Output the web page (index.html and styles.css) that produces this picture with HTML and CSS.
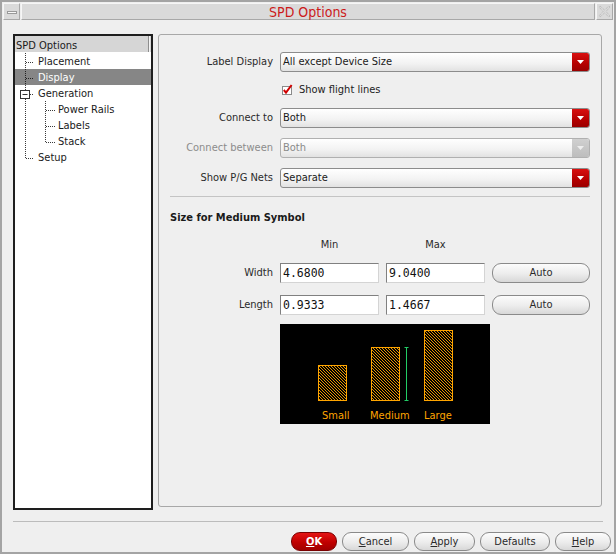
FILE: index.html
```html
<!DOCTYPE html>
<html>
<head>
<meta charset="utf-8">
<link rel="stylesheet" href="styles.css">
</head>
<body>
<div class="window">
  <div class="titlebar">
    <div class="tb-btn"><span class="minbar"></span></div>
    <div class="title">SPD Options</div>
    <div class="tb-btn">
      <svg width="15" height="15" viewBox="0 0 15 15"><path d="M3 2 L7.5 6 L12 2 L13 3 L9 7.5 L13 12 L12 13 L7.5 9 L3 13 L2 12 L6 7.5 L2 3 Z" fill="none" stroke="#b4b4b4" stroke-width="1" stroke-dasharray="1 1"/></svg>
    </div>
  </div>

  <div class="main">
    <div class="tree">
      <div class="tree-head"><span class="tree-head-cell">SPD Options</span><span class="tree-head-rest"></span></div>
      <div class="tree-row">
        <svg class="guide" width="23" height="16"><path d="M10.5 0 V16 M11 9.5 H19" class="dot"/></svg><span>Placement</span>
      </div>
      <div class="tree-row selected">
        <svg class="guide" width="23" height="16"><path d="M10.5 0 V16 M11 9.5 H19" class="dot"/></svg><span>Display</span>
      </div>
      <div class="tree-row">
        <svg class="guide" width="23" height="16"><path d="M10.5 0 V5 M10.5 14 V16 M15 9.5 H19" class="dot"/><rect x="5.5" y="5.5" width="9" height="8" class="box"/><path d="M7.5 9.5 H12.5" class="box"/></svg><span>Generation</span>
      </div>
      <div class="tree-row">
        <svg class="guide" width="43" height="16"><path d="M10.5 0 V16 M30.5 0 V16 M31 9.5 H40" class="dot"/></svg><span>Power Rails</span>
      </div>
      <div class="tree-row">
        <svg class="guide" width="43" height="16"><path d="M10.5 0 V16 M30.5 0 V16 M31 9.5 H40" class="dot"/></svg><span>Labels</span>
      </div>
      <div class="tree-row">
        <svg class="guide" width="43" height="16"><path d="M10.5 0 V16 M30.5 0 V10 M31 9.5 H40" class="dot"/></svg><span>Stack</span>
      </div>
      <div class="tree-row">
        <svg class="guide" width="23" height="16"><path d="M10.5 0 V10 M11 9.5 H19" class="dot"/></svg><span>Setup</span>
      </div>
    </div>

    <div class="panel">
      <div class="form">
        <div class="label">Label Display</div>
        <div class="combo"><span class="combo-text">All except Device Size</span><span class="combo-arrow"><svg width="7" height="4"><path d="M0 0 H7 L3.5 4 Z" fill="#fff"/></svg></span></div>

        <div></div>
        <div class="check">
          <svg class="check-box" width="11" height="11" viewBox="0 0 11 11"><rect x="0.5" y="2.5" width="9" height="8" fill="#fff" stroke="#8a8a8a"/><path d="M1.8 6 L4 8.6 L9.6 1" fill="none" stroke="#d00000" stroke-width="2"/></svg>
          <span>Show flight lines</span>
        </div>

        <div class="label">Connect to</div>
        <div class="combo"><span class="combo-text">Both</span><span class="combo-arrow"><svg width="7" height="4"><path d="M0 0 H7 L3.5 4 Z" fill="#fff"/></svg></span></div>

        <div class="label disabled">Connect between</div>
        <div class="combo combo-disabled"><span class="combo-text">Both</span><span class="combo-arrow"><svg width="7" height="4"><path d="M0 0 H7 L3.5 4 Z" fill="#eee"/></svg></span></div>

        <div class="label">Show P/G Nets</div>
        <div class="combo"><span class="combo-text">Separate</span><span class="combo-arrow"><svg width="7" height="4"><path d="M0 0 H7 L3.5 4 Z" fill="#fff"/></svg></span></div>
      </div>

      <div class="sep"></div>

      <div class="section-title">Size for Medium Symbol</div>

      <div class="size-grid">
        <div></div>
        <div class="col-head">Min</div>
        <div class="col-head">Max</div>
        <div></div>

        <div class="label">Width</div>
        <div class="field">4.6800</div>
        <div class="field">9.0400</div>
        <div class="btn">Auto</div>

        <div class="label">Length</div>
        <div class="field">0.9333</div>
        <div class="field">1.4667</div>
        <div class="btn">Auto</div>
      </div>

      <svg class="preview" width="210" height="100" viewBox="0 0 210 100">
        <defs>
          <pattern id="hatch" patternUnits="userSpaceOnUse" width="3" height="3">
            <path d="M0 0 L3 3 M-1 2 L1 4 M2 -1 L4 1" stroke="#ffa500" stroke-width="0.9"/>
          </pattern>
        </defs>
        <rect width="210" height="100" fill="#000"/>
        <rect x="38.5" y="41.5" width="28" height="35" fill="url(#hatch)" stroke="#ffa500"/>
        <rect x="91.5" y="23.5" width="28" height="53" fill="url(#hatch)" stroke="#ffa500"/>
        <rect x="144.5" y="6.5" width="28" height="70" fill="url(#hatch)" stroke="#ffa500"/>
        <path d="M126.5 23 V77 M124.5 23.5 H128.5 M124.5 76.5 H128.5" stroke="#22cc66"/>
        <text x="42" y="95" class="pv-text">Small</text>
        <text x="90" y="95" class="pv-text">Medium</text>
        <text x="144" y="95" class="pv-text">Large</text>
      </svg>
    </div>
  </div>

  <div class="footer-sep"></div>

  <div class="buttons">
    <div class="btn btn-ok w-ok"><u>O</u>K</div>
    <div class="btn w-cancel"><u>C</u>ancel</div>
    <div class="btn w-apply"><u>A</u>pply</div>
    <div class="btn w-defaults">Defaults</div>
    <div class="btn w-help"><u>H</u>elp</div>
  </div>
</div>
</body>
</html>
```

FILE: styles.css
```css
* { box-sizing: border-box; }

body {
  margin: 0;
  font-family: "DejaVu Sans Condensed", "DejaVu Sans", sans-serif;
  font-stretch: condensed;
  font-size: 11px;
  color: #222;
  background: #efefef;
}

.window {
  width: 616px;
  height: 554px;
  border: 2px solid #a4a4a4;
  background: #efefef;
  display: flex;
  flex-direction: column;
}

/* title bar */
.titlebar {
  display: flex;
  gap: 1px;
  height: 17px;
  margin: 1px 0 0 1px;
  width: 610px;
}
.tb-btn {
  width: 17px;
  height: 17px;
  background: #dadada;
  border: 1px solid;
  border-color: #f6f6f6 #a8a8a8 #a8a8a8 #f6f6f6;
  display: flex;
  align-items: center;
  justify-content: center;
}
.minbar {
  width: 10px;
  height: 3px;
  margin-top: 2px;
  background: #f8f8f8;
  border: 1px solid #9a9a9a;
}
.title {
  flex: 1;
  background: #dadada;
  border: 1px solid;
  border-color: #f6f6f6 #a8a8a8 #a8a8a8 #f6f6f6;
  color: #cc1a1a;
  font-size: 14px;
  line-height: 15px;
  padding-top: 1px;
  text-align: center;
}

/* main area */
.main {
  display: flex;
  gap: 5px;
  margin-top: 14px;
  padding: 0 12px 0 11px;
  height: 476px;
  align-items: flex-start;
}

.tree {
  width: 140px;
  height: 476px;
  border: 2px solid #1e1e1e;
  background: #fff;
  display: flex;
  flex-direction: column;
}
.tree-head {
  display: flex;
  height: 16px;
  background: #d6d6d6;
  margin-bottom: 1px;
}
.tree-head-cell {
  width: 134px;
  padding: 3px 0 0 1px;
  line-height: 13px;
  border-right: 1px solid #8e8e8e;
  color: #1a1a1a;
}
.tree-head-rest {
  flex: 1;
  border-left: 1px solid #f4f4f4;
}
.tree-row {
  display: flex;
  align-items: flex-start;
  height: 16px;
  color: #1a1a1a;
}
.tree-row span {
  padding-top: 1px;
  line-height: 16px;
}
.tree-row.selected {
  background: #868686;
  color: #fff;
}
.guide { flex: none; }
.dot {
  fill: none;
  stroke: #3a3a3a;
  stroke-width: 1;
  stroke-dasharray: 1 1;
}
.box {
  fill: #fff;
  stroke: #333;
  stroke-width: 1;
}
.selected .dot { stroke: #222; }

/* right panel */
.panel {
  width: 444px;
  height: 473px;
  border: 1px solid #a8a8a8;
  border-radius: 3px;
  padding: 17px 11px 0 11px;
}

.form {
  display: grid;
  grid-template-columns: 103px 310px;
  grid-template-rows: 29px 27px 30px 30px 20px;
  column-gap: 7px;
  align-items: start;
}
.label {
  text-align: right;
  line-height: 20px;
  white-space: nowrap;
  color: #2a2a2a;
}
.label.disabled { color: #8c8c8c; }

.combo {
  display: flex;
  height: 20px;
  border: 1px solid #8c8c8c;
  border-radius: 3px;
  background: linear-gradient(#ffffff, #f2f2f2 60%, #e2e2e2);
  overflow: hidden;
}
.combo-text {
  flex: 1;
  padding-left: 2px;
  line-height: 18px;
  color: #1a1a1a;
}
.combo-arrow {
  width: 17px;
  background: linear-gradient(#d81010, #b40000 60%, #9a0000);
  display: flex;
  align-items: center;
  justify-content: center;
}
.combo-disabled .combo-text { color: #8a8a8a; }
.combo-disabled { border-color: #b0b0b0; }
.combo-disabled .combo-arrow {
  background: linear-gradient(#d0d0d0, #bdbdbd);
}

.check {
  display: flex;
  align-items: center;
  gap: 6px;
  padding-left: 2px;
  height: 18px;
  line-height: 18px;
}
.check-box { flex: none; margin-top: -2px; }

.sep {
  margin-top: 8px;
  border-top: 1px solid #c4c4c4;
}

.section-title {
  margin-top: 14px;
  line-height: 14px;
  font-weight: bold;
  color: #1a1a1a;
}

.size-grid {
  display: grid;
  grid-template-columns: 103px 99px 99px 98px;
  grid-template-rows: 14px 20px 20px;
  column-gap: 7px;
  row-gap: 11px;
  margin-top: 13px;
}
.size-grid .label:last-of-type,
.size-grid > :nth-child(n+9) { margin-top: 1px; }
.col-head {
  text-align: center;
  line-height: 14px;
  color: #2a2a2a;
}
.field {
  height: 20px;
  background: #fff;
  border: 1px solid;
  border-color: #808080 #d4d4d4 #d4d4d4 #808080;
  padding-left: 2px;
  font-family: "DejaVu Sans Mono", monospace;
  font-stretch: normal;
  font-size: 11.5px;
  line-height: 18px;
  color: #111;
}

.btn {
  height: 20px;
  border: 1px solid #8a8a8a;
  border-radius: 9px;
  background: linear-gradient(#fcfcfc, #ececec 55%, #d8d8d8);
  text-align: center;
  line-height: 18px;
  color: #2a2a2a;
}
.btn u { text-decoration: underline; }

.preview {
  display: block;
  margin: 10px 0 0 110px;
}
.pv-text {
  fill: #ffa500;
  font-family: "DejaVu Sans Condensed", "DejaVu Sans", sans-serif;
  font-stretch: condensed;
  font-size: 11px;
}

/* footer */
.footer-sep {
  margin: 11px 11px 0 11px;
  border-top: 1px solid #bcbcbc;
}
.buttons {
  display: flex;
  justify-content: flex-end;
  gap: 5px;
  margin-top: 10px;
  padding-right: 3px;
}
.buttons .btn { height: 19px; line-height: 17px; }
.btn-ok {
  background: linear-gradient(#e41414, #c00000 55%, #a00000);
  border-color: #7a0000;
  color: #fff;
  font-weight: bold;
}
.w-ok { width: 46px; }
.w-cancel { width: 67px; }
.w-apply { width: 61px; }
.w-defaults { width: 70px; }
.w-help { width: 56px; }
```
